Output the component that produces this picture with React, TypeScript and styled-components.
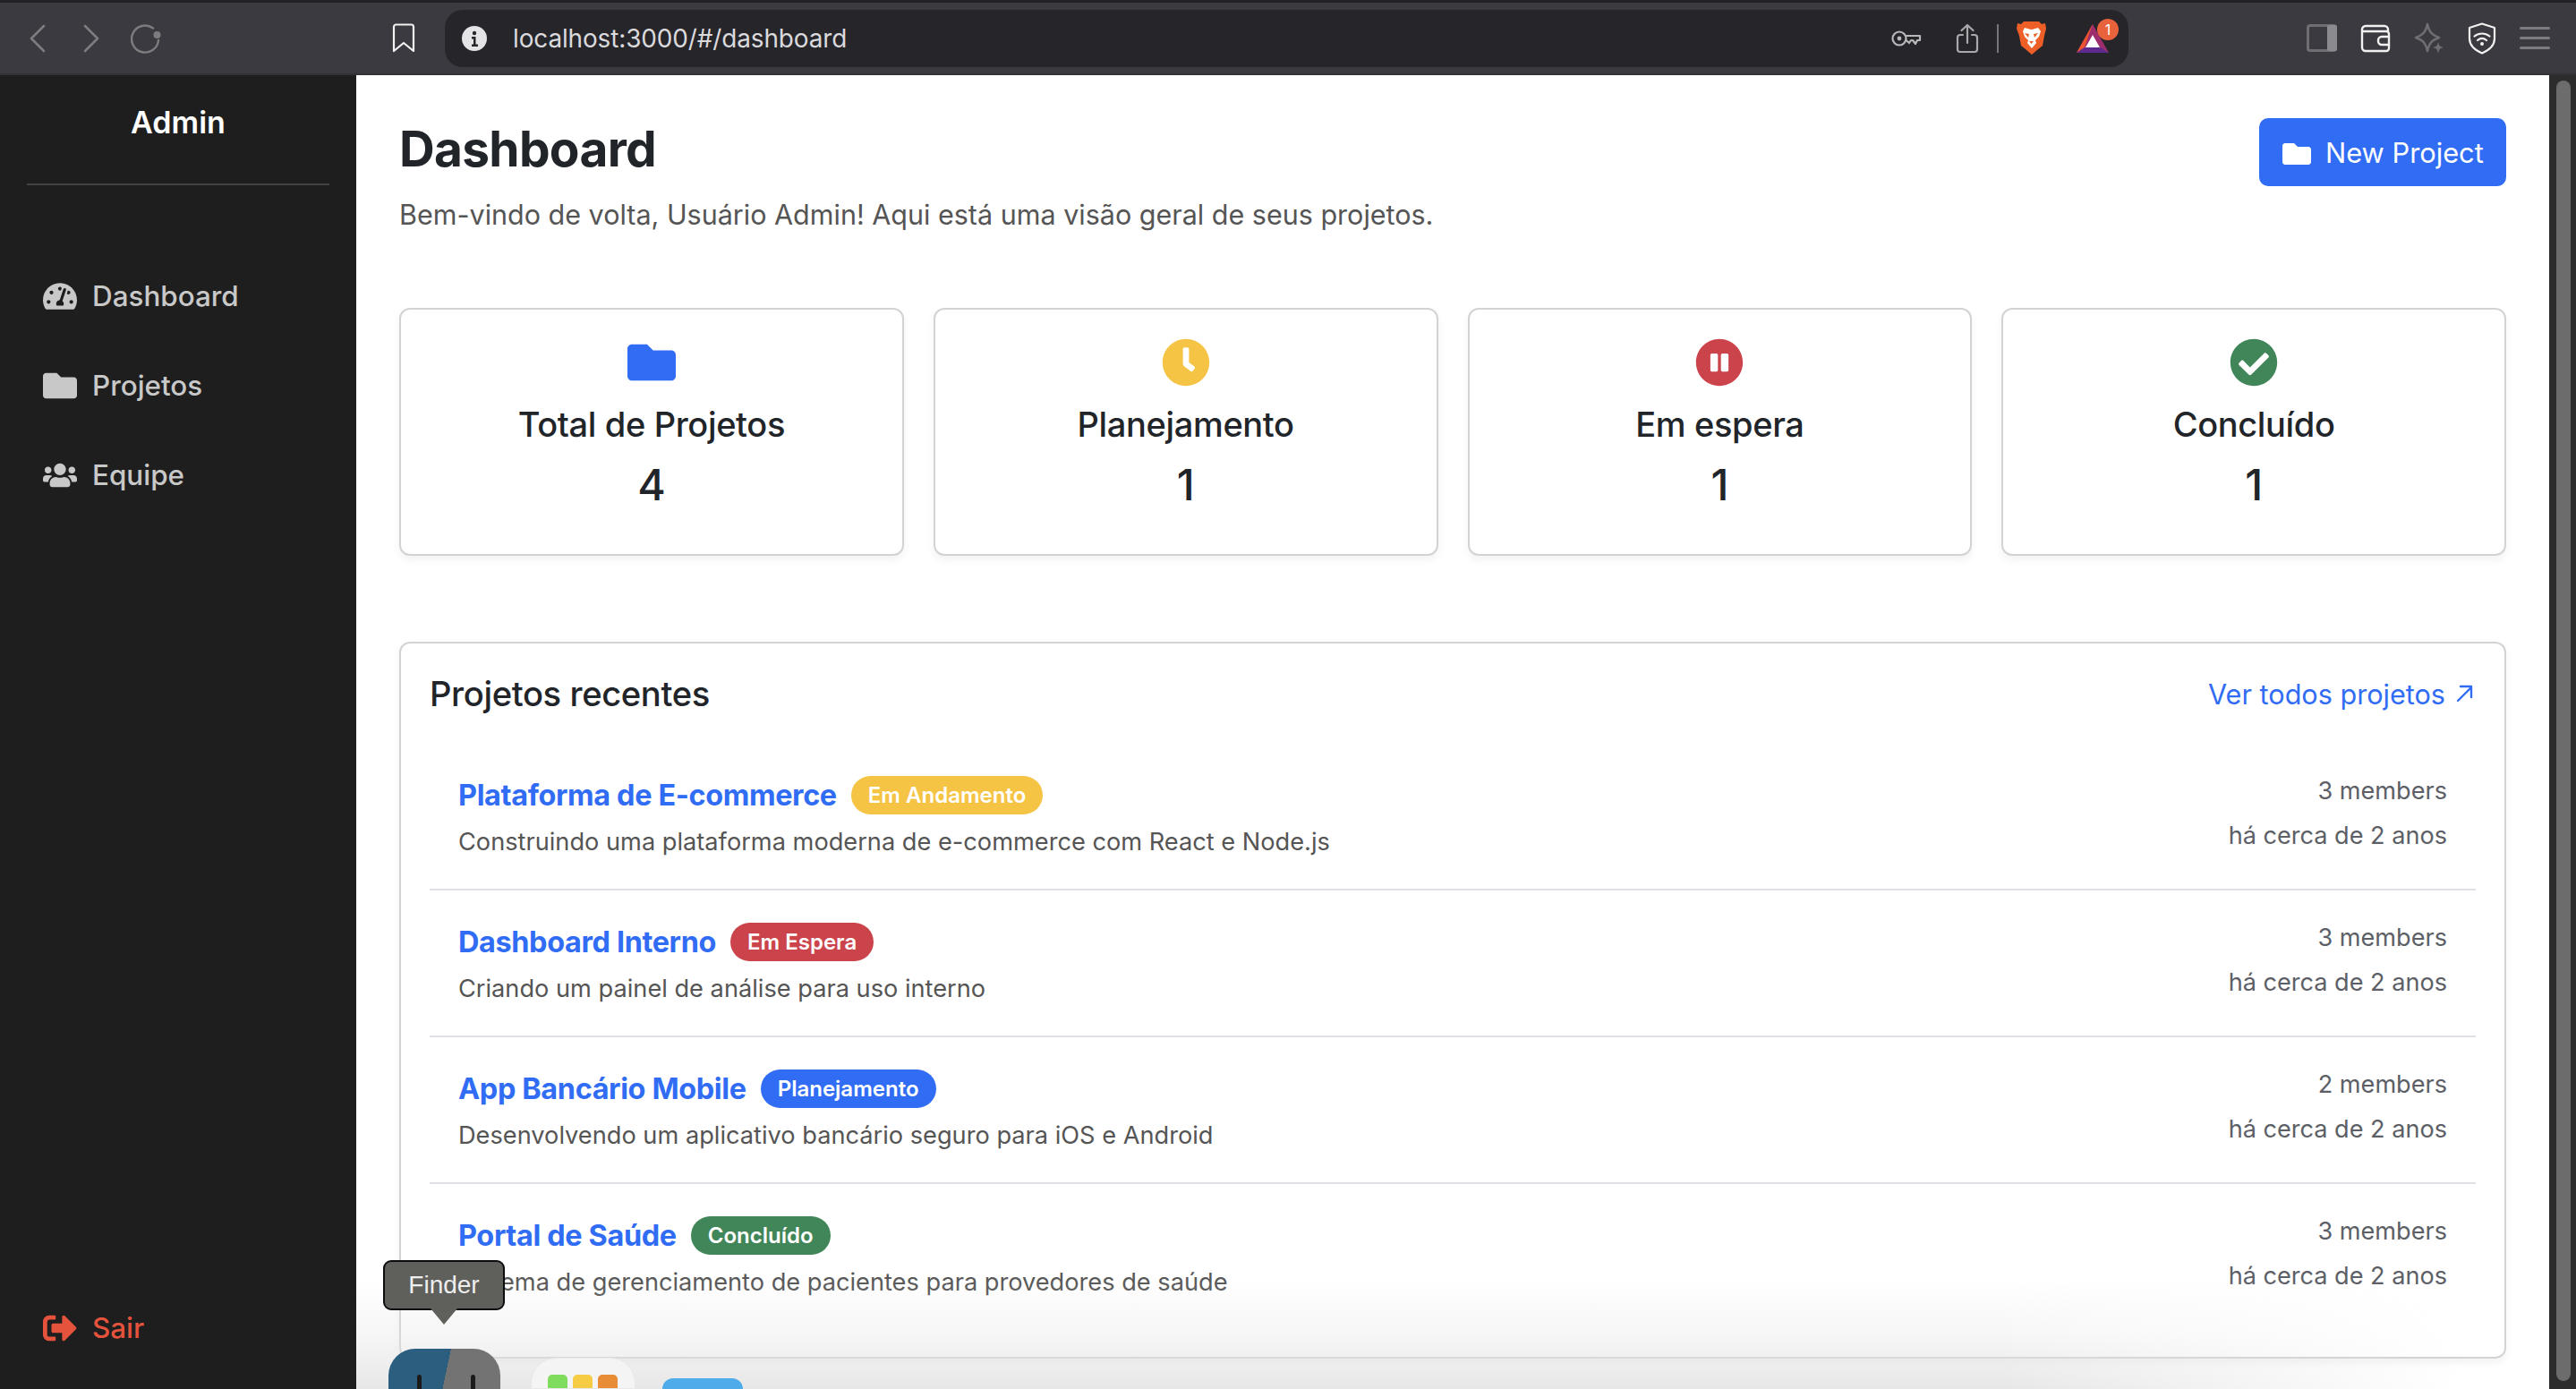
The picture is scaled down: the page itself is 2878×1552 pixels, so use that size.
import React from "react";
import styled, { createGlobalStyle } from "styled-components";
import { FaTachometerAlt, FaFolder, FaUsers, FaSignOutAlt, FaClock, FaPauseCircle, FaCheckCircle } from "react-icons/fa";

const Global = createGlobalStyle`
  html, body { margin: 0; padding: 0; width: 2878px; height: 1552px; overflow: hidden; background: #fff; }
  * { box-sizing: border-box; }
  body { font-family: Inter, "Liberation Sans", sans-serif; }
`;

const Page = styled.div`
  width: 2878px; height: 1552px; display: flex; flex-direction: column; overflow: hidden; position: relative;
`;
const Toolbar = styled.header`
  height: 84px; flex: none; display: flex; align-items: center; background: #3b3a40;
  border-top: 3px solid #222126; border-bottom: 2px solid #323136; padding-left: 33px;
`;
const Slot = styled.span<{ $left?: number }>`
  display: flex; flex: none; margin-left: ${p => p.$left ?? 0}px;
`;
const UrlBar = styled.div`
  width: 1881px; height: 64px; margin-left: 33px; background: #26252a; border-radius: 20px;
  display: flex; align-items: center; padding-left: 19px; flex: none;
`;
const UrlText = styled.span`
  font-size: 27.9px; color: #dadadd; margin-left: 29px; letter-spacing: -0.1px; width: 1540px; white-space: nowrap;
`;
const Separator = styled.span`
  width: 2px; height: 32px; background: #77767a; margin-left: 20px; flex: none;
`;
const Body = styled.div`
  flex: 1; display: flex; min-height: 0; position: relative;
`;
const Sidebar = styled.aside`
  width: 398px; flex: none; background: #1e1e1e; display: flex; flex-direction: column; padding: 0 30px 48px 0;
`;
const Brand = styled.div`
  margin-left: 30px; height: 123px; border-bottom: 2px solid #444; color: #fff; font-weight: 600; font-size: 34px;
  display: flex; justify-content: center; padding-top: 32px; line-height: 42px;
`;
const Nav = styled.nav`
  display: flex; flex-direction: column; gap: 60px; padding: 104px 0 0 48px;
`;
const NavItem = styled.a<{ $danger?: boolean }>`
  display: flex; align-items: center; gap: 17px; height: 40px; font-size: 31.4px; font-weight: 450; color: ${p => (p.$danger ? "#e5533d" : "#c8c8c8")};
  svg { width: 38px; height: 38px; flex: none; }
`;
const Logout = styled(NavItem)`
  margin: auto 0 0 48px;
`;
const Main = styled.main`
  flex: 1; min-width: 0; background: #fff; padding: 48px 48px 0 48px; display: flex; flex-direction: column; overflow: hidden; position: relative;
`;
const Head = styled.div`
  display: flex; justify-content: space-between; align-items: flex-start;
`;
const H1 = styled.h1`
  margin: 0; font-size: 55px; line-height: 68px; font-weight: 700; color: #212529; letter-spacing: -0.7px;
`;
const Sub = styled.p`
  margin: 20px 0 0; font-size: 30.5px; line-height: 40px; color: #555;
`;
const NewButton = styled.button`
  width: 276px; height: 76px; border: 0; border-radius: 10px; background: #316cf4; color: #fff; font: 400 30.8px Inter, sans-serif;
  display: flex; align-items: center; gap: 16px; padding: 0 0 0 26px; white-space: nowrap;
  svg { width: 32px; height: 32px; flex: none; margin-top: 4px; }
`;
const Stats = styled.section`
  display: grid; grid-template-columns: repeat(4, 1fr); gap: 33px; margin-top: 84px;
`;
const Stat = styled.div`
  height: 277px; border: 2px solid #d3d3d3; border-radius: 12px; background: #fff; box-shadow: 0 5px 10px rgba(0,0,0,.05);
  display: flex; flex-direction: column; align-items: center; padding-top: 32px;
`;
const StatIcon = styled.span<{ $c: string }>`
  color: ${p => p.$c}; display: flex; svg { width: 54px; height: 54px; }
`;
const StatLabel = styled.div`
  font-size: 38px; line-height: 48px; font-weight: 500; color: #212529; margin-top: 18px; letter-spacing: -0.35px;
`;
const StatValue = styled.div`
  font-size: 48px; line-height: 56px; font-weight: 500; color: #212529; margin-top: 16px;
`;
const Panel = styled.section`
  margin-top: 96px; height: 801px; flex: none; border: 2px solid #d3d3d3; border-radius: 12px; box-shadow: 0 5px 10px rgba(0,0,0,.05);
  padding: 0 32px;
`;
const PanelHead = styled.div`
  display: flex; justify-content: space-between; align-items: center; height: 112px;
`;
const H2 = styled.h2`
  margin: 0; font-size: 38.2px; font-weight: 500; color: #212529; letter-spacing: -0.4px;
`;
const AllLink = styled.a`
  font-size: 30.6px; color: #316cf4; display: flex; align-items: center; gap: 0;
  svg { width: 26px; height: 26px; margin-left: 8px; }
`;
const Row = styled.article`
  height: 164px; padding: 35px 32px 0; display: flex; justify-content: space-between;
  border-bottom: 2px solid #dee2e6; &:last-child { border-bottom: 0; }
`;
const TitleLine = styled.div`
  display: flex; align-items: center; gap: 16px; height: 44px;
`;
const RowTitle = styled.a`
  font-size: 32.4px; font-weight: 700; color: #316cf4; letter-spacing: -0.35px;
`;
const Badge = styled.span<{ $c: string }>`
  background: ${p => p.$c}; color: #fff; font-size: 24px; font-weight: 600; height: 43px; border-radius: 22px; padding: 0 19px;
  display: flex; align-items: center;
`;
const Desc = styled.p`
  margin: 11px 0 0; font-size: 27.2px; line-height: 40px; color: #555;
`;
const Meta = styled.div`
  text-align: right; font-size: 27.1px; line-height: 36px; color: #5c6066; display: flex; flex-direction: column; gap: 14px;
`;
const ScrollTrack = styled.div`
  width: 30px; flex: none; background: #2c2c2c; padding: 6px 6px 9px 8px;
`;
const Thumb = styled.div`
  height: 100%; border-radius: 8px; background: #6c6c6c;
`;
const DockFade = styled.div`
  position: absolute; left: 0; right: 0; bottom: 0; height: 130px; pointer-events: none;
  background: linear-gradient(180deg, rgba(225,225,225,0) 0%, rgba(225,225,225,.25) 50%, rgba(225,225,225,.8) 100%);
  -webkit-mask-image: linear-gradient(90deg, #000 75%, transparent 96%);
  mask-image: linear-gradient(90deg, #000 75%, transparent 96%);
`;
const Tooltip = styled.div`
  position: absolute; left: 30px; top: 1408px; width: 136px; height: 56px; border: 2px solid #0c0c0c; border-radius: 9px;
  background: #5f5f5c; color: #eee; font: 400 28px "Liberation Sans", sans-serif; display: flex; align-items: center; justify-content: center;
  &::after {
    content: ""; position: absolute; left: 51px; top: 52px; width: 30px; height: 18px; background: #5f5f5c;
    clip-path: polygon(0 0, 100% 0, 50% 100%);
  }
`;
const FinderIcon = styled.div`
  position: absolute; left: 36px; top: 1507px; width: 125px; height: 45px; border-radius: 30px 30px 0 0; overflow: hidden;
  background: linear-gradient(102deg, #2c5e7f 0 52%, #737373 52% 100%);
  &::before, &::after { content: ""; position: absolute; top: 29px; width: 5px; height: 26px; background: #1b1b1b; border-radius: 3px; }
  &::before { left: 32px; } &::after { left: 92px; }
`;
const LaunchIcon = styled.div`
  position: absolute; left: 195px; top: 1517px; width: 117px; height: 35px; border-radius: 28px 28px 0 0;
  background: #f4f4f4; border: 1px solid #e8e8e8; display: flex; gap: 6px; padding: 18px 0 0 18px; overflow: hidden;
`;
const Tile = styled.span<{ $c: string }>`
  width: 22px; height: 40px; border-radius: 5px 5px 0 0; background: ${p => p.$c};
`;
const BlueIcon = styled.div`
  position: absolute; left: 342px; top: 1540px; width: 90px; height: 12px; border-radius: 24px 24px 0 0; background: #4fabe9;
`;

const stroke = (c: string, w = 2.4) => ({ fill: "none", stroke: c, strokeWidth: w, strokeLinecap: "round" as const, strokeLinejoin: "round" as const });

const Back = () => <svg width="18" height="32" viewBox="0 0 18 32"><path d="M16 2 2 16l14 14" {...stroke("#7d7d80", 2.6)} /></svg>;
const Forward = () => <svg width="18" height="32" viewBox="0 0 18 32"><path d="M2 2l14 14L2 30" {...stroke("#7d7d80", 2.6)} /></svg>;
const Reload = () => (
  <svg width="34" height="34" viewBox="0 0 34 34">
    <path d="M25 5.500A15 15 0 1 0 31 19" {...stroke("#7d7d80", 2.4)} />
    <circle cx="29.500" cy="13" r="4" fill="#7d7d80" />
  </svg>
);
const Bookmark = () => <svg width="26" height="33" viewBox="0 0 26 33"><path d="M2 4a2.500 2.500 0 0 1 2.500-2.500h17A2.500 2.500 0 0 1 24 4v27l-11-9-11 9z" {...stroke("#f2f2f2", 2.2)} /></svg>;
const Info = () => (
  <svg width="28" height="28" viewBox="0 0 28 28">
    <circle cx="14" cy="14" r="14" fill="#e4e4e6" />
    <circle cx="14" cy="8" r="2.200" fill="#26252a" />
    <path d="M11 12h4.500v8.500H18V23h-7v-2.500h2V14.500h-2z" fill="#26252a" />
  </svg>
);
const Key = () => (
  <svg width="34" height="20" viewBox="0 0 34 20">
    <circle cx="9" cy="10" r="7.500" {...stroke("#b8b8ba", 2.2)} />
    <circle cx="9" cy="10" r="2.400" fill="#b8b8ba" />
    <path d="M16.500 7H32v5h-3l-2 4-3-4h-2l-2 3-3.500-3" {...stroke("#b8b8ba", 2.2)} />
  </svg>
);
const Share = () => (
  <svg width="26" height="34" viewBox="0 0 26 34">
    <path d="M8 13H5a3 3 0 0 0-3 3v13a3 3 0 0 0 3 3h16a3 3 0 0 0 3-3V16a3 3 0 0 0-3-3h-3" {...stroke("#a9a9ac", 2.2)} />
    <path d="M13 22V2M6.500 8 13 2l6.500 6" {...stroke("#a9a9ac", 2.2)} />
  </svg>
);
const Lion = () => (
  <svg width="33" height="37" viewBox="0 0 33 37">
    <path d="M8 0h17l3 3 4-1 1 6-2 8-2 11-5 4-7 6-7-6-5-4L3 16 0 8l1-6 4 1z" fill="#ee5f28" />
    <path d="M9 7l7 2 1 0 7-2 3 4-2 6-4 4 1 3-5 6-5-6 1-3-4-4-2-6z" fill="#fff" />
    <path d="M9 13l5 1-1 4zM24 13l-5 1 1 4zM14 22h5l-2.500 3z" fill="#ee5f28" />
  </svg>
);
const Bat = () => (
  <svg width="36" height="32" viewBox="0 0 36 32">
    <path d="M18 0 36 32H0z" fill="#9c2e6d" />
    <path d="M18 0 0 32l9-6z" fill="#e9532f" />
    <path d="M0 32h36l-9-6H9z" fill="#5e2a8e" />
    <path d="M18 12l8 14H10z" fill="#fff" />
  </svg>
);
const Sidepanel = () => (
  <svg width="34" height="31" viewBox="0 0 34 31">
    <rect x="1.500" y="1.500" width="31" height="28" rx="2.500" {...stroke("#6f6e72", 3)} />
    <rect x="23" y="1" width="11" height="29" rx="2" fill="#8b8a8e" />
  </svg>
);
const Wallet = () => (
  <svg width="34" height="32" viewBox="0 0 34 32">
    <path d="M6 2h21a4 4 0 0 1 4 4v2M2 6a4 4 0 0 1 4-4M2 6v20a4 4 0 0 0 4 4h23a3 3 0 0 0 3-3V11a3 3 0 0 0-3-3H2" {...stroke("#f1f1f1", 2.4)} />
    <path d="M32 14h-8a4 4 0 0 0-4 4v1a4 4 0 0 0 4 4h8" {...stroke("#f1f1f1", 2.4)} />
  </svg>
);
const Sparkle = () => (
  <svg width="34" height="36" viewBox="0 0 34 36">
    <path d="M15 2c2 9 5 12 13 15-8 3-11 6-13 15C13 23 10 20 2 17c8-3 11-6 13-15z" {...stroke("#6f6e72", 2.6)} />
    <path d="M27 22c1 4 2 5 6 6-4 1-5 2-6 7-1-5-2-6-6-7 4-1 5-2 6-6z" fill="#6f6e72" />
  </svg>
);
const Shield = () => (
  <svg width="32" height="36" viewBox="0 0 32 36">
    <path d="M16 1.500 30 6v12c0 8-6 13-14 16.500C8 31 2 26 2 18V6z" {...stroke("#f1f1f1", 2.2)} />
    <path d="M7.500 15.500c5-4 12-4 17 0M11 20c3-2.500 7-2.500 10 0" {...stroke("#f1f1f1", 2.2)} />
    <circle cx="16" cy="24" r="2" fill="#f1f1f1" />
  </svg>
);
const Menu = () => (
  <svg width="34" height="27" viewBox="0 0 34 27">
    <path d="M1.500 2.500h31M1.500 13.500h31M1.500 24.500h31" {...stroke("#7d7c80", 3)} />
  </svg>
);
const Arrow = () => (
  <svg viewBox="0 0 26 26"><path d="M6 21 21 6M9 5h12v12" {...stroke("#316cf4", 2.4)} /></svg>
);
const Notify = styled.span`
  position: absolute; left: 23px; top: -6px; width: 24px; height: 24px; border-radius: 50%; background: #e8623b; color: #fff;
  font-size: 16px; display: flex; align-items: center; justify-content: center;
`;
const BatWrap = styled(Slot)`
  position: relative;
`;
const DockLayer = styled.div`
  position: absolute; left: 398px; top: 0; width: 0; height: 0;
`;

const stats = [
  { label: "Total de Projetos", value: 4, icon: <FaFolder />, c: "#316cf4" },
  { label: "Planejamento", value: 1, icon: <FaClock />, c: "#f6c445" },
  { label: "Em espera", value: 1, icon: <FaPauseCircle />, c: "#cb444c" },
  { label: "Concluído", value: 1, icon: <FaCheckCircle />, c: "#418658" },
];
const rows = [
  { t: "Plataforma de E-commerce", b: "Em Andamento", c: "#f6c445", d: "Construindo uma plataforma moderna de e-commerce com React e Node.js", m: "3 members" },
  { t: "Dashboard Interno", b: "Em Espera", c: "#cb444c", d: "Criando um painel de análise para uso interno", m: "3 members" },
  { t: "App Bancário Mobile", b: "Planejamento", c: "#316cf4", d: "Desenvolvendo um aplicativo bancário seguro para iOS e Android", m: "2 members" },
  { t: "Portal de Saúde", b: "Concluído", c: "#418658", d: "Sistema de gerenciamento de pacientes para provedores de saúde", m: "3 members" },
];

export default function App() {
  return (
    <Page>
      <Global />
      <Toolbar>
        <Slot><Back /></Slot>
        <Slot $left={42}><Forward /></Slot>
        <Slot $left={35}><Reload /></Slot>
        <Slot $left={258}><Bookmark /></Slot>
        <UrlBar>
          <Info />
          <UrlText>localhost:3000/#/dashboard</UrlText>
          <Key />
          <Slot $left={38}><Share /></Slot>
          <Separator />
          <Slot $left={20}><Lion /></Slot>
          <BatWrap $left={34}><Bat /><Notify>1</Notify></BatWrap>
        </UrlBar>
        <Slot $left={199}><Sidepanel /></Slot>
        <Slot $left={26}><Wallet /></Slot>
        <Slot $left={26}><Sparkle /></Slot>
        <Slot $left={26}><Shield /></Slot>
        <Slot $left={26}><Menu /></Slot>
      </Toolbar>
      <Body>
        <Sidebar>
          <Brand>Admin</Brand>
          <Nav>
            <NavItem><FaTachometerAlt />Dashboard</NavItem>
            <NavItem><FaFolder />Projetos</NavItem>
            <NavItem><FaUsers />Equipe</NavItem>
          </Nav>
          <Logout $danger><FaSignOutAlt />Sair</Logout>
        </Sidebar>
        <Main>
          <Head>
            <div>
              <H1>Dashboard</H1>
              <Sub>Bem-vindo de volta, Usuário Admin! Aqui está uma visão geral de seus projetos.</Sub>
            </div>
            <NewButton><FaFolder />New Project</NewButton>
          </Head>
          <Stats>
            {stats.map(s => (
              <Stat key={s.label}>
                <StatIcon $c={s.c}>{s.icon}</StatIcon>
                <StatLabel>{s.label}</StatLabel>
                <StatValue>{s.value}</StatValue>
              </Stat>
            ))}
          </Stats>
          <Panel>
            <PanelHead>
              <H2>Projetos recentes</H2>
              <AllLink>Ver todos projetos<Arrow /></AllLink>
            </PanelHead>
            {rows.map(r => (
              <Row key={r.t}>
                <div>
                  <TitleLine>
                    <RowTitle>{r.t}</RowTitle>
                    <Badge $c={r.c}>{r.b}</Badge>
                  </TitleLine>
                  <Desc>{r.d}</Desc>
                </div>
                <Meta>
                  <span>{r.m}</span>
                  <span>há cerca de 2 anos</span>
                </Meta>
              </Row>
            ))}
          </Panel>
          <DockFade />
        </Main>
        <ScrollTrack><Thumb /></ScrollTrack>
      </Body>
      <DockLayer>
        <Tooltip>Finder</Tooltip>
        <FinderIcon />
        <LaunchIcon>
          <Tile $c="#7fdc5c" />
          <Tile $c="#f7cc45" />
          <Tile $c="#e88d35" />
        </LaunchIcon>
        <BlueIcon />
      </DockLayer>
    </Page>
  );
}
